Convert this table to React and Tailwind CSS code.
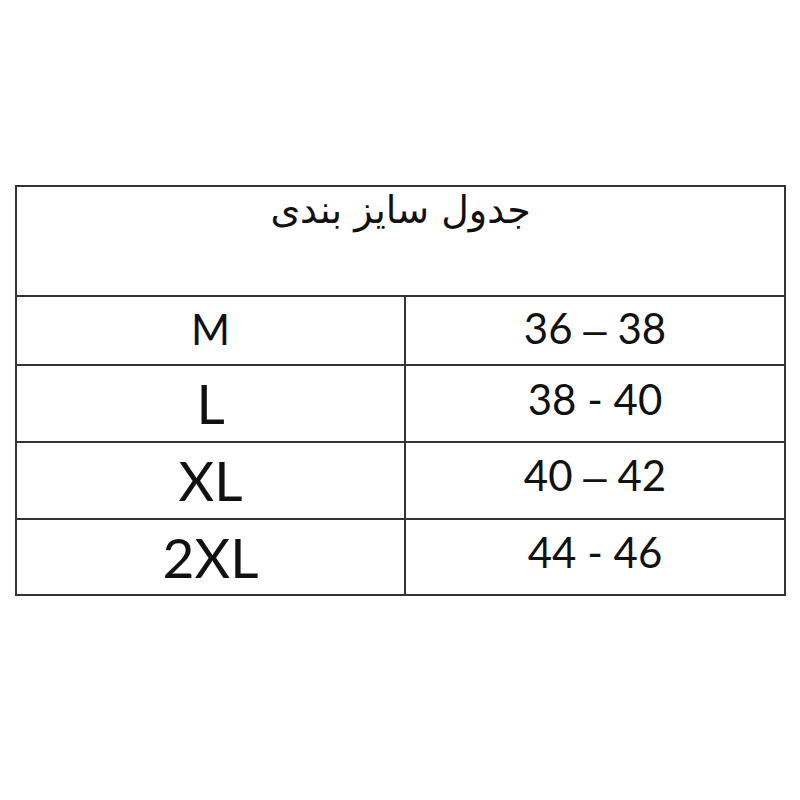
import React from "react";

const rows = [
  { size: "M", from: "36", dash: "–", to: "38", h: "h-[69px]", big: false, pb: "pb-[4px]", rpb: "pb-[4px]" },
  { size: "L", from: "38", dash: "-", to: "40", h: "h-[77px]", big: true, pb: "pb-[0px]", rpb: "pb-[10px]" },
  { size: "XL", from: "40", dash: "–", to: "42", h: "h-[77px]", big: true, pb: "pb-[0px]", rpb: "pb-[10px]" },
  { size: "2XL", from: "44", dash: "-", to: "46", h: "h-[74px]", big: true, pb: "pb-[0px]", rpb: "pb-[10px]", last: true },
];

export default function App() {
  return (
    <div className="w-[800px] h-[800px] bg-white pt-[185px] pl-[15px] text-[#111]">
      <div
        className="w-[771px] border-2 border-[#333]"
        style={{ fontFamily: "Lato, 'Open Sans', sans-serif" }}
      >
        {/* Header */}
        <div className="h-[110px] border-b-2 border-[#333] flex justify-center pt-[4px]">
          <div
            dir="rtl"
            className="text-[38px] leading-none"
            style={{ fontFamily: "'DejaVu Sans', 'Noto Sans', sans-serif" }}
          >
            جدول سایز بندی
          </div>
        </div>

        {/* Rows */}
        {rows.map((r) => (
          <div
            key={r.size}
            className={`flex ${r.h} ${r.last ? "" : "border-b-2 border-[#333]"}`}
          >
            <div
              className={`w-[389px] border-r-2 border-[#333] flex items-center justify-center leading-none ${r.pb} ${
                r.big ? "text-[55px]" : "text-[42px]"
              }`}
            >
              {r.size}
            </div>
            <div className={`flex-1 flex items-center justify-center leading-none text-[42px] ${r.rpb}`}>
              <span className="whitespace-pre">
                {r.from + " "}
                <span
                  style={{ fontFamily: r.dash === "–" ? "'Liberation Sans', sans-serif" : undefined }}
                >
                  {r.dash}
                </span>
                {" " + r.to}
              </span>
            </div>
          </div>
        ))}
      </div>
    </div>
  );
}
